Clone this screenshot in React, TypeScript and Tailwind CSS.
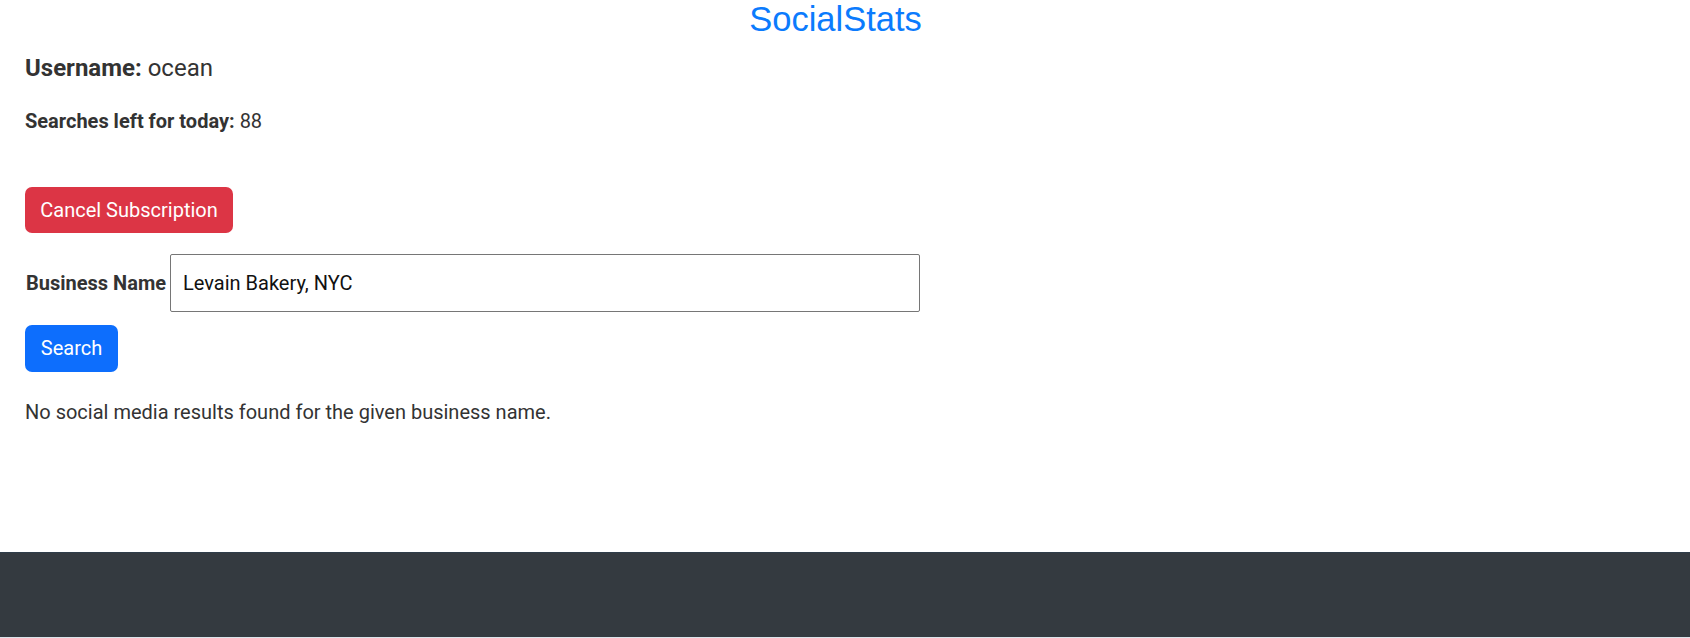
import React from "react";

export default function App() {
  return (
    <div className="min-h-screen flex flex-col bg-white text-[#333] font-['Roboto',sans-serif]">
      <main className="flex-1 pl-[25px]">
        <h1 className="text-center pr-[44px] text-[34.5px] leading-[38px] font-normal text-[#0b7bfd] font-['Liberation_Sans','Arial',sans-serif]">
          SocialStats
        </h1>
        <h5 className="mt-[16px] text-[24px] leading-[28.8px]">
          <span className="font-bold">Username:</span> ocean
        </h5>
        <p className="mt-[23px] text-[20px] leading-[30px]">
          <span className="font-bold">Searches left for today:</span> 88
        </p>
        <button className="mt-[51px] block w-[208px] h-[46px] rounded-[7px] bg-[#dc3545] text-white text-[20px] leading-[30px]">
          Cancel Subscription
        </button>
        <div className="mt-[21px] flex items-center">
          <label className="font-bold text-[20px] leading-[30px] pl-[1px]">Business Name</label>
          <input
            className="ml-[4px] w-[750px] h-[58px] border border-[#767676] rounded-[2px] px-[12px] text-[20px] text-[#111] outline-none"
            defaultValue="Levain Bakery, NYC"
          />
        </div>
        <button className="mt-[13px] block w-[93px] h-[47px] rounded-[7px] bg-[#0d6efd] text-white text-[20px] leading-[30px]">
          Search
        </button>
        <p className="mt-[25px] text-[20px] leading-[30px]">
          No social media results found for the given business name.
        </p>
      </main>
      <footer className="h-[86px] bg-[#343a40] border-t border-[#2f3d4a] border-b border-b-[#dce3ea]" />
    </div>
  );
}
